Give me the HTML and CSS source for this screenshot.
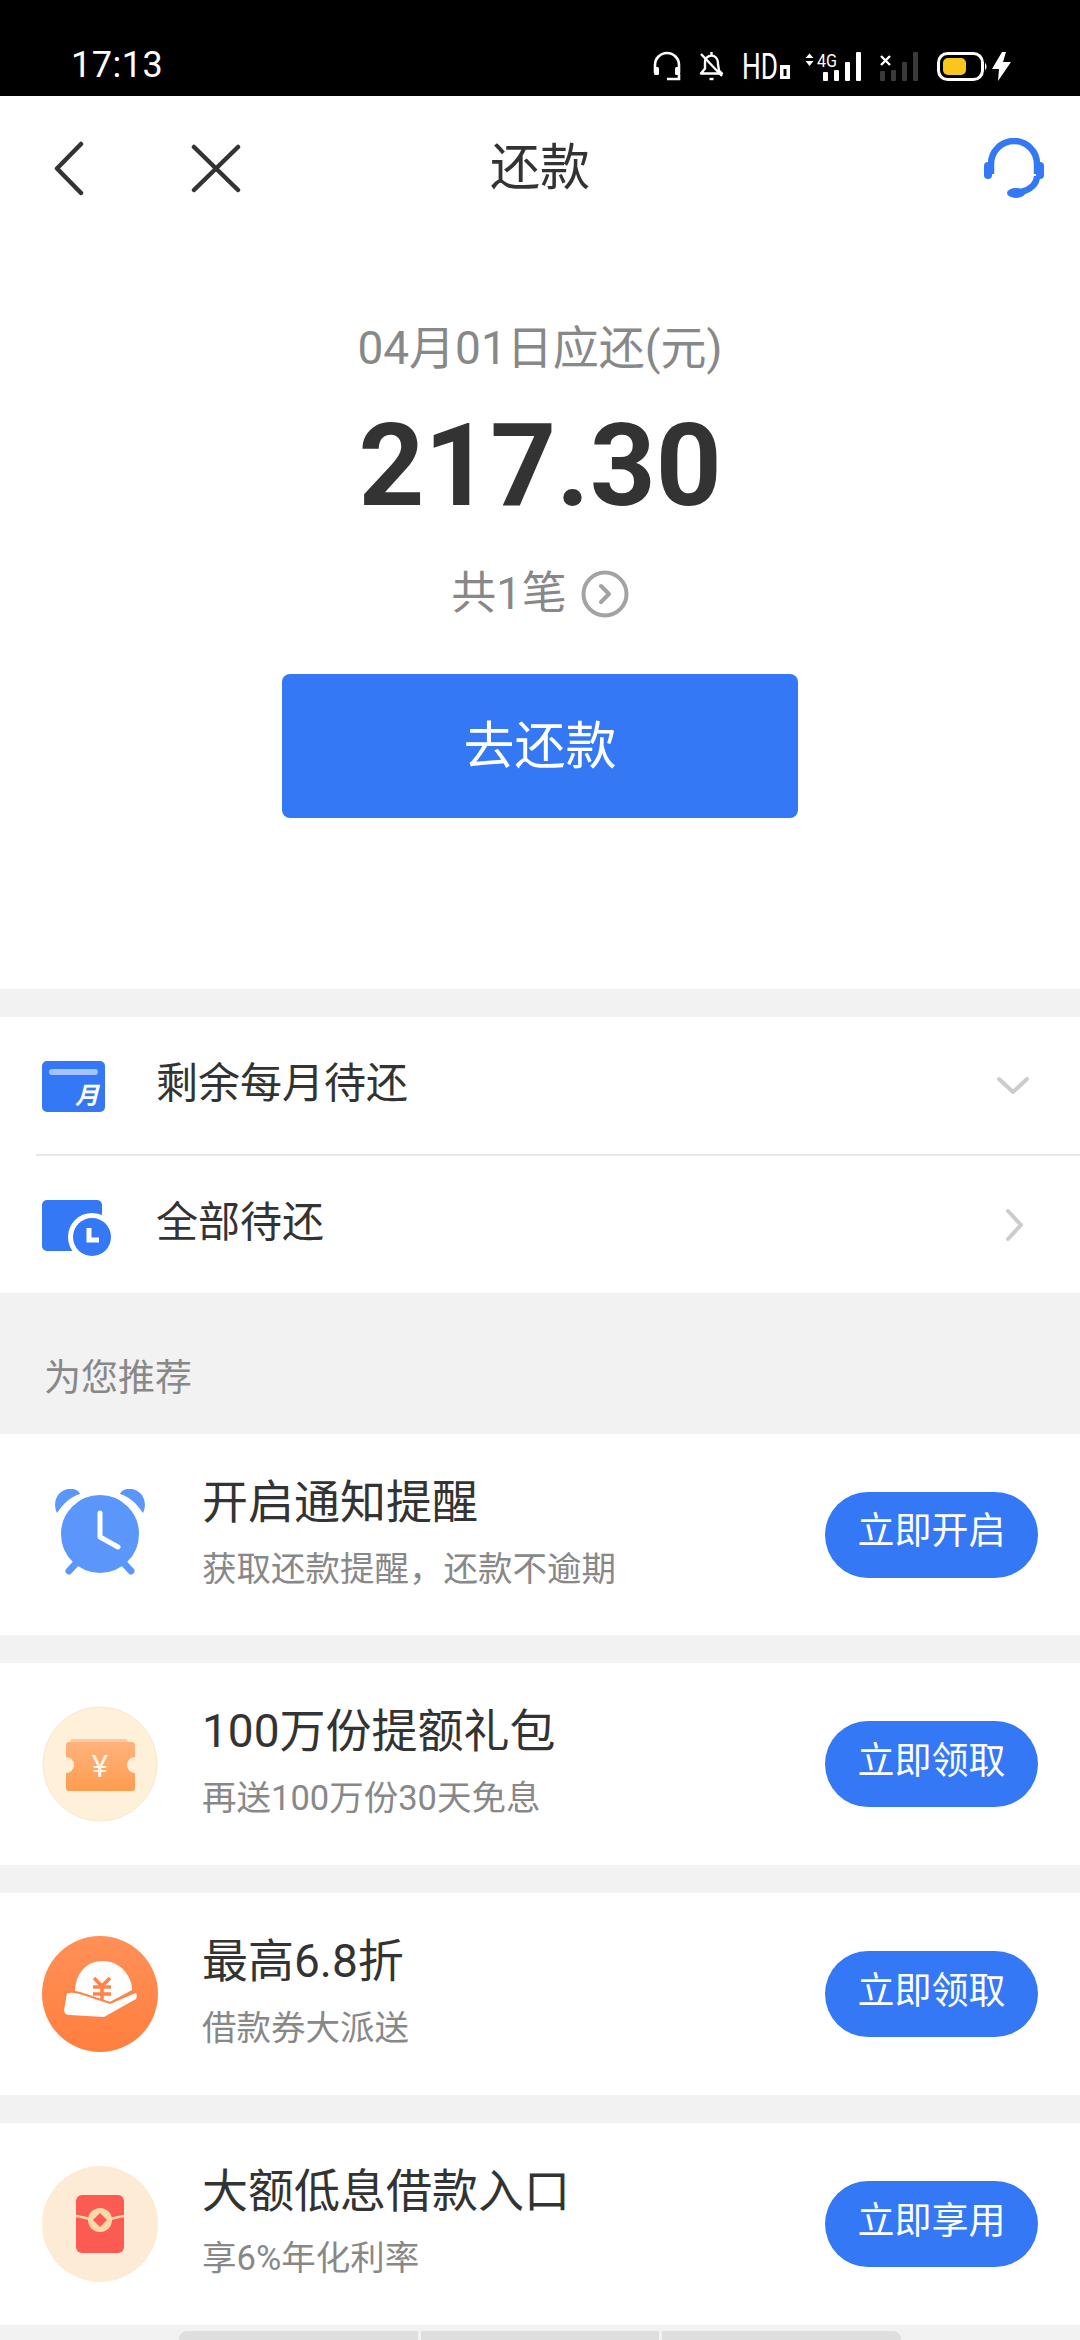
FILE: index.html
```html
<!DOCTYPE html>
<html lang="zh-CN">

<head>
  <meta charset="UTF-8">
  <meta name="viewport" content="width=device-width, initial-scale=1.0">
  <title>还款</title>
  <link rel="stylesheet" href="styles.css">
</head>

<body>
  <div class="status-bar">
    <span class="status-time">17:13</span>
    <div class="status-icons">
      <svg class="si-headset" viewBox="0 0 28 29" fill="none" stroke="#fff" stroke-width="2.6">
        <path d="M2 21V13a12 12 0 0 1 24 0v8"></path>
        <rect x="1" y="15" width="5" height="8" rx="1.5" fill="#fff" stroke="none"></rect>
        <rect x="22" y="15" width="5" height="8" rx="1.5" fill="#fff" stroke="none"></rect>
        <path d="M26 22v5H14"></path>
      </svg>
      <svg class="si-bell" viewBox="0 0 25 29" fill="none" stroke="#fff" stroke-width="2.4" stroke-linejoin="round">
        <path d="M6 10a6.500 6.500 0 0 1 11-4.500c2 2 2 5 2 7l1 6 3 3H2l4-5z"></path>
        <path d="M12.500 0v3"></path>
        <path d="M2 2l21 22"></path>
        <path d="M10.500 27h4"></path>
      </svg>
      <svg class="si-hd" viewBox="0 0 48 29">
        <text x="0" y="27" textLength="36" lengthAdjust="spacingAndGlyphs" class="si-hd-text">HD</text>
        <rect x="38" y="13" width="10" height="14" fill="#fff"></rect>
        <rect x="41.500" y="17" width="3" height="7" fill="#000"></rect>
      </svg>
      <svg class="si-signal" viewBox="0 0 57 29" fill="#fff">
        <path d="M0.500 6L4.500 1.500 8.500 6zM0.500 9L4.500 14 8.500 9z"></path>
        <text x="12" y="15" textLength="20" lengthAdjust="spacingAndGlyphs" class="si-4g-text">4G</text>
        <rect x="18" y="20" width="5" height="9" rx="1"></rect>
        <rect x="29" y="18" width="5" height="11" rx="1"></rect>
        <rect x="40" y="10" width="5" height="19" rx="1"></rect>
        <rect x="51" y="0" width="5" height="29" rx="1"></rect>
      </svg>
      <svg class="si-signal-off" viewBox="0 0 38 29">
        <path d="M1 4l9 9M10 4l-9 9" stroke="#fff" stroke-width="2.400"></path>
        <g fill="#3a3a3a">
          <rect x="0" y="19" width="5" height="10" rx="1"></rect>
          <rect x="11" y="18" width="5" height="11" rx="1"></rect>
          <rect x="22" y="10" width="5" height="19" rx="1"></rect>
          <rect x="33" y="0" width="5" height="29" rx="1"></rect>
        </g>
      </svg>
      <svg class="si-battery" viewBox="0 0 50 29">
        <rect x="1.500" y="1.500" width="44" height="26" rx="9" fill="none" stroke="#fff" stroke-width="3"></rect>
        <rect x="6" y="6" width="23" height="17" rx="5" fill="#f9c620"></rect>
        <path d="M48 11c2 1 2 6 0 7z" fill="#fff"></path>
      </svg>
      <svg class="si-bolt" viewBox="0 0 19 29" fill="#fff">
        <path d="M10 0L0 17h7l-1 12L19 10h-8l3-10z"></path>
      </svg>
    </div>
  </div>

  <header class="nav">
    <div class="nav-left">
      <svg class="nav-back" viewBox="0 0 30 55" fill="none" stroke="#333" stroke-width="4.500" stroke-linecap="round" stroke-linejoin="round">
        <path d="M27 3L3 27.500 27 52"></path>
      </svg>
      <svg class="nav-close" viewBox="0 0 50 49" fill="none" stroke="#333" stroke-width="4.500" stroke-linecap="round">
        <path d="M3 3l44 43M47 3L3 46"></path>
      </svg>
    </div>
    <h1 class="nav-title">还款</h1>
    <svg class="nav-service" viewBox="0 0 62 60" fill="none" stroke="#3478f6" stroke-width="6.500">
      <path d="M8 36V26a23 23 0 0 1 46 0v10"></path>
      <rect x="1" y="24" width="8" height="17" rx="4" fill="#3478f6" stroke="none"></rect>
      <rect x="53" y="24" width="8" height="17" rx="4" fill="#3478f6" stroke="none"></rect>
      <path d="M54 38c0 8-7 14-16 16"></path>
      <ellipse cx="33" cy="55" rx="9" ry="5" fill="#3478f6" stroke="none"></ellipse>
    </svg>
  </header>

  <section class="summary">
    <p class="summary-date">04月01日应还(元)</p>
    <p class="summary-amount">217.30</p>
    <p class="summary-count">共1笔
      <svg class="summary-more" viewBox="0 0 48 48" fill="none" stroke="#a3a3a3" stroke-width="4" stroke-linecap="round" stroke-linejoin="round">
        <circle cx="24" cy="24" r="21.500"></circle>
        <path d="M20 16l8 8-8 8"></path>
      </svg>
    </p>
    <button class="summary-pay">去还款</button>
  </section>

  <section class="plans">
    <div class="plan-row">
      <svg class="plan-icon" viewBox="0 0 70 57">
        <rect x="0" y="0" width="63" height="51" rx="5" fill="#3478f6"></rect>
        <rect x="7" y="8" width="49" height="6" rx="3" fill="#a5c3fb"></rect>
        <text x="33" y="43" class="plan-icon-text">月</text>
      </svg>
      <span class="plan-label">剩余每月待还</span>
      <svg class="plan-arrow-down" viewBox="0 0 34 20" fill="none" stroke="#ccc" stroke-width="4" stroke-linecap="round" stroke-linejoin="round">
        <path d="M3 3l14 13L31 3"></path>
      </svg>
    </div>
    <div class="plan-row">
      <svg class="plan-icon" viewBox="0 0 70 57">
        <rect x="0" y="0" width="60" height="51" rx="5" fill="#3478f6"></rect>
        <circle cx="50" cy="37" r="24" fill="#fff"></circle>
        <circle cx="50" cy="37" r="19" fill="#3478f6"></circle>
        <path d="M47 28v12h10" fill="none" stroke="#fff" stroke-width="5"></path>
      </svg>
      <span class="plan-label">全部待还</span>
      <svg class="plan-arrow-right" viewBox="0 0 20 34" fill="none" stroke="#ccc" stroke-width="4" stroke-linecap="round" stroke-linejoin="round">
        <path d="M3 3l13 14L3 31"></path>
      </svg>
    </div>
  </section>

  <h2 class="section-title">为您推荐</h2>

  <section class="rec-list">
    <div class="rec-card rec-first">
      <div class="rec-icon">
        <svg class="rec-alarm" viewBox="0 0 92 88">
          <path d="M3 25C-3 12 6 0 17 1c5 0 8 2 9 5C16 9 9 16 3 25zM89 25c6-13-3-25-14-24-5 0-8 2-9 5 10 3 17 10 23 19z" fill="#5b96fa"></path>
          <circle cx="46" cy="46" r="40" fill="#5b96fa" stroke="#fff" stroke-width="2"></circle>
          <path d="M15 83l10-11M77 83L67 72" fill="none" stroke="#5b96fa" stroke-width="7" stroke-linecap="round"></path>
          <path d="M46 25v24l18 10" fill="none" stroke="#fff" stroke-width="5" stroke-linecap="round" stroke-linejoin="round"></path>
        </svg>
      </div>
      <div class="rec-text">
        <p class="rec-title">开启通知提醒</p>
        <p class="rec-sub">获取还款提醒，还款不逾期</p>
      </div>
      <button class="rec-action">立即开启</button>
    </div>

    <div class="rec-card">
      <div class="rec-icon">
        <svg viewBox="0 0 116 116">
          <defs>
            <linearGradient id="ticket" x1="0" y1="0" x2="0" y2="1">
              <stop offset="0" stop-color="#ffb27c"></stop>
              <stop offset="1" stop-color="#ff9c50"></stop>
            </linearGradient>
          </defs>
          <circle cx="58" cy="58" r="57" fill="#fef0d9" stroke="#f8e6cc" stroke-width="1"></circle>
          <path d="M28 37c0-3 1-4 3-4h52c2 0 3 1 3 4z" fill="#ffc79b"></path>
          <path d="M24 39c0-2 1-3 3-3h63c2 0 3 1 3 3v12a8 8 0 0 0 0 16v15c0 2-1 3-3 3H27c-2 0-3-1-3-3V67a8 8 0 0 0 0-16z" fill="url(#ticket)"></path>
          <text x="58" y="71" class="rec-yen">¥</text>
        </svg>
      </div>
      <div class="rec-text">
        <p class="rec-title">100万份提额礼包</p>
        <p class="rec-sub">再送100万份30天免息</p>
      </div>
      <button class="rec-action">立即领取</button>
    </div>

    <div class="rec-card">
      <div class="rec-icon">
        <svg viewBox="0 0 116 116">
          <defs>
            <linearGradient id="coin" x1="0" y1="0" x2="0" y2="1">
              <stop offset="0" stop-color="#ff9058"></stop>
              <stop offset="1" stop-color="#ff7f3e"></stop>
            </linearGradient>
          </defs>
          <circle cx="58" cy="58" r="58" fill="url(#coin)"></circle>
          <path d="M33 56C33 38 44 25 61 25c17 0 29 15 29 29L68 66z" fill="#fff"></path>
          <path d="M52 42l8 8 8-8M51 51h18M51 58h18M60 50v16" fill="none" stroke="#ff8347" stroke-width="3.500"></path>
          <path d="M24 57c3-2 10-1 14 0l30 10 25-11c3-1 4 6 1 8L62 82l-34-2c-5 0-7-3-7-6z" fill="#fff" stroke="#ff8347" stroke-width="2"></path>
        </svg>
      </div>
      <div class="rec-text">
        <p class="rec-title">最高6.8折</p>
        <p class="rec-sub">借款券大派送</p>
      </div>
      <button class="rec-action">立即领取</button>
    </div>

    <div class="rec-card">
      <div class="rec-icon">
        <svg viewBox="0 0 116 116">
          <circle cx="58" cy="58" r="58" fill="#feebd5"></circle>
          <rect x="34" y="29" width="48" height="58" rx="6" fill="#fb5b52"></rect>
          <path d="M34 50c8 1 14 4 24 4s16-3 24-4" fill="none" stroke="#fdd9a5" stroke-width="2.500"></path>
          <circle cx="58" cy="54" r="12" fill="#fdd9a5"></circle>
          <path d="M58 47l7 7-7 7-7-7z" fill="#fb5b52"></path>
        </svg>
      </div>
      <div class="rec-text">
        <p class="rec-title">大额低息借款入口</p>
        <p class="rec-sub">享6%年化利率</p>
      </div>
      <button class="rec-action">立即享用</button>
    </div>
  </section>

  <div class="tab-stub">
    <span></span>
    <span></span>
    <span></span>
  </div>
</body>

</html>
```

FILE: styles.css
```css
* {
  box-sizing: border-box;
}

html,
body {
  margin: 0;
  height: 2340px;
  overflow: hidden;
}

body {
  font-family: Roboto, "Noto Sans CJK SC", sans-serif;
  background: #f2f2f2;
  color: #333;
}

p,
h1,
h2 {
  margin: 0;
  font-weight: 400;
}

button {
  border: none;
  color: #fff;
  font-family: inherit;
  background: #3478f6;
  padding: 0;
}

svg {
  display: block;
  flex: none;
}

/* status bar */
.status-bar {
  height: 96px;
  background: #000;
  color: #fff;
  display: flex;
  justify-content: space-between;
  align-items: flex-start;
  padding: 44px 69px 0 71px;
}

.status-time {
  font-size: 36px;
  line-height: 42px;
  letter-spacing: 0.5px;
}

.status-icons {
  display: flex;
  height: 29px;
  margin-top: 8px;
}

.status-icons svg {
  height: 29px;
  overflow: visible;
}

.si-headset {
  width: 28px;
  margin-right: 18px;
}

.si-bell {
  width: 25px;
  margin-right: 18px;
}

.si-hd {
  width: 48px;
  margin-right: 15px;
}

.si-hd-text {
  font-size: 37px;
  fill: #fff;
}

.si-signal {
  width: 57px;
  margin-right: 18px;
}

.si-4g-text {
  font-size: 19px;
}

.si-signal-off {
  width: 38px;
  margin-right: 19px;
}

.si-battery {
  width: 50px;
  margin-right: 5px;
}

.si-bolt {
  width: 19px;
}

/* nav */
.nav {
  height: 144px;
  background: #fff;
  display: flex;
  align-items: center;
  justify-content: space-between;
  padding: 0 35px 0 54px;
  position: relative;
}

.nav-left {
  display: flex;
  align-items: center;
  gap: 107px;
}

.nav-back {
  width: 30px;
  height: 55px;
}

.nav-close {
  width: 50px;
  height: 49px;
}

.nav-title {
  position: absolute;
  left: 0;
  right: 0;
  top: 36px;
  text-align: center;
  font-size: 50px;
  line-height: 72px;
}

.nav-service {
  width: 62px;
  height: 60px;
}

/* summary */
.summary {
  height: 749px;
  background: #fff;
  display: flex;
  flex-direction: column;
  align-items: center;
  padding-top: 74px;
}

.summary-date {
  font-size: 46px;
  line-height: 68px;
  color: #888;
}

.summary-amount {
  font-size: 115px;
  line-height: 136px;
  font-weight: 700;
  margin-top: 16px;
}

.summary-count {
  display: flex;
  align-items: center;
  gap: 14px;
  font-size: 45px;
  line-height: 64px;
  color: #888;
  margin-top: 28px;
}

.summary-more {
  width: 48px;
  height: 48px;
}

.summary-pay {
  width: 516px;
  height: 144px;
  border-radius: 8px;
  font-size: 51px;
  margin-top: 48px;
  padding-bottom: 9px;
}

/* plan rows */
.plans {
  background: #fff;
  margin-top: 28px;
}

.plan-row {
  height: 137px;
  display: flex;
  align-items: center;
  padding: 0 50px 0 42px;
}

.plan-row+.plan-row {
  height: 139px;
  border-top: 2px solid #e8e8e8;
  margin-left: 36px;
  padding-left: 6px;
}

.plan-icon {
  width: 70px;
  height: 57px;
  margin-top: 8px;
}

.plan-icon-text {
  font-size: 24px;
  font-weight: 700;
  font-style: italic;
  fill: #fff;
}

.plan-label {
  flex: 1;
  font-size: 42px;
  margin-left: 44px;
  padding-bottom: 12px;
}

.plan-arrow-down {
  width: 34px;
  height: 20px;
}

.plan-arrow-right {
  width: 20px;
  height: 34px;
  margin-right: 5px;
}

.section-title {
  height: 141px;
  padding-top: 59px;
  padding-left: 44px;
  font-size: 37px;
  line-height: 54px;
  color: #888;
}

/* recommendations */
.rec-list {
  display: flex;
  flex-direction: column;
  gap: 28px;
}

.rec-card {
  height: 202px;
  background: #fff;
  display: flex;
  align-items: center;
  padding: 0 42px;
}

.rec-first {
  height: 201px;
}

.rec-icon {
  width: 116px;
  height: 116px;
  display: flex;
  align-items: center;
  justify-content: center;
}

.rec-alarm {
  width: 92px;
  height: 88px;
  margin-bottom: 5px;
}

.rec-yen {
  font-size: 31px;
  fill: #fff5e6;
  text-anchor: middle;
}

.rec-text {
  flex: 1;
  margin-left: 44px;
  padding-bottom: 7px;
}

.rec-title {
  font-size: 46px;
  line-height: 66px;
}

.rec-sub {
  font-size: 34.500px;
  line-height: 50px;
  color: #888;
  margin-top: 9px;
}

.rec-action {
  width: 213px;
  height: 86px;
  border-radius: 43px;
  font-size: 37px;
  padding-bottom: 13px;
}

/* cut-off tab bar at the bottom */
.tab-stub {
  display: flex;
  gap: 3px;
  margin: 6px 0 0 179px;
  width: 722px;
}

.tab-stub span {
  flex: 1;
  height: 12px;
  background: #dedede;
}

.tab-stub span:first-child {
  border-top-left-radius: 8px;
}

.tab-stub span:last-child {
  border-top-right-radius: 8px;
}
```
